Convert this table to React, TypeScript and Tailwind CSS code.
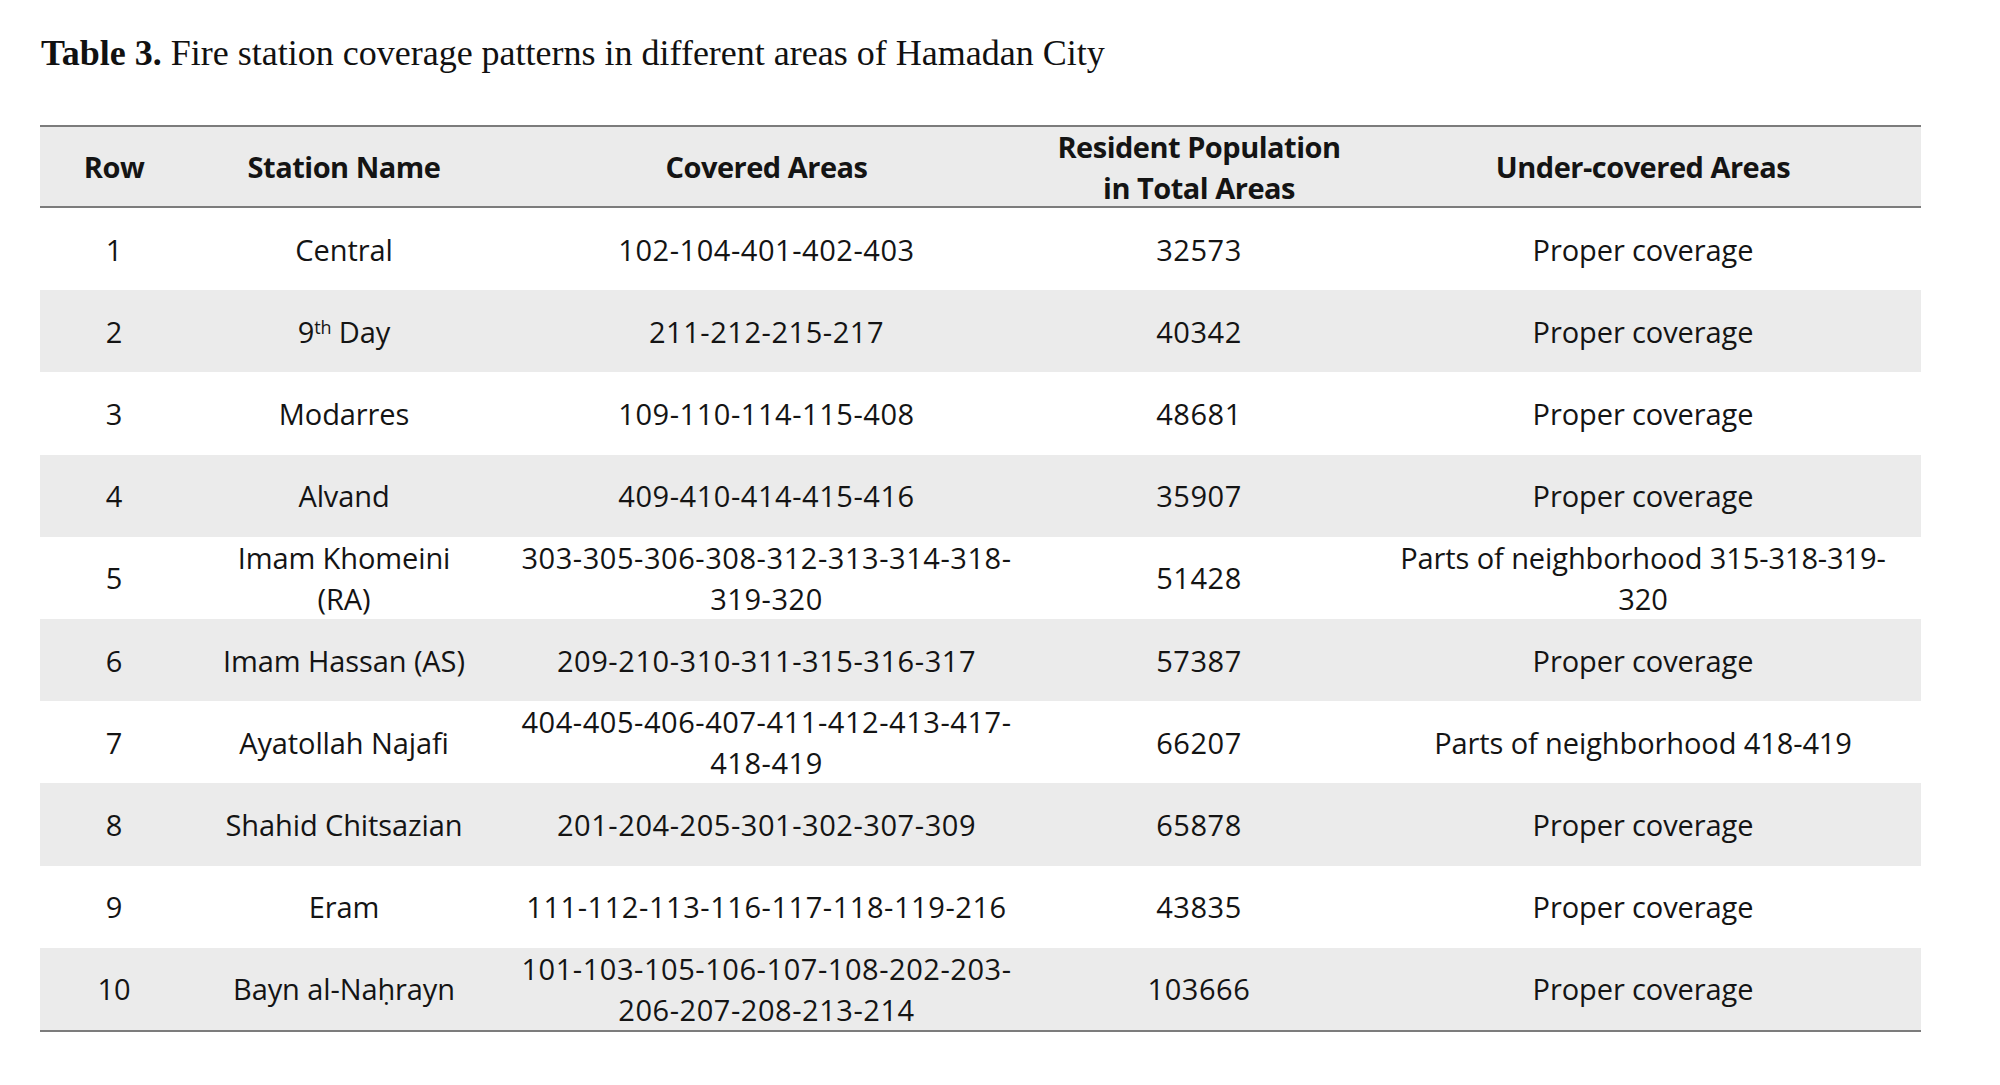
import React from "react";

type Row = {
  n: string;
  name: React.ReactNode;
  areas: React.ReactNode;
  pop: string;
  under: React.ReactNode;
};

const rows: Row[] = [
  { n: "1", name: "Central", areas: "102-104-401-402-403", pop: "32573", under: "Proper coverage" },
  {
    n: "2",
    name: (
      <>
        9<sup className="text-[0.62em]">th</sup> Day
      </>
    ),
    areas: "211-212-215-217",
    pop: "40342",
    under: "Proper coverage",
  },
  { n: "3", name: "Modarres", areas: "109-110-114-115-408", pop: "48681", under: "Proper coverage" },
  { n: "4", name: "Alvand", areas: "409-410-414-415-416", pop: "35907", under: "Proper coverage" },
  {
    n: "5",
    name: (
      <>
        Imam Khomeini
        <br />
        (RA)
      </>
    ),
    areas: (
      <>
        303-305-306-308-312-313-314-318-
        <br />
        319-320
      </>
    ),
    pop: "51428",
    under: (
      <>
        Parts of neighborhood 315-318-319-
        <br />
        320
      </>
    ),
  },
  { n: "6", name: "Imam Hassan (AS)", areas: "209-210-310-311-315-316-317", pop: "57387", under: "Proper coverage" },
  {
    n: "7",
    name: "Ayatollah Najafi",
    areas: (
      <>
        404-405-406-407-411-412-413-417-
        <br />
        418-419
      </>
    ),
    pop: "66207",
    under: "Parts of neighborhood 418-419",
  },
  { n: "8", name: "Shahid Chitsazian", areas: "201-204-205-301-302-307-309", pop: "65878", under: "Proper coverage" },
  { n: "9", name: "Eram", areas: "111-112-113-116-117-118-119-216", pop: "43835", under: "Proper coverage" },
  {
    n: "10",
    name: "Bayn al-Naḥrayn",
    areas: (
      <>
        101-103-105-106-107-108-202-203-
        <br />
        206-207-208-213-214
      </>
    ),
    pop: "103666",
    under: "Proper coverage",
  },
];

const cell = "flex items-center justify-center text-center";

export default function App() {
  return (
    <div className="w-[2000px] h-[1085px] bg-white text-[#141414] overflow-hidden">
      <div className="h-[125px] pl-[41px] pt-[31px]">
        <p
          className="text-[36px] leading-[44px] text-[#111]"
          style={{ fontFamily: '"Liberation Serif", "Times New Roman", serif' }}
        >
          <span className="font-bold">Table 3.</span> Fire station coverage patterns in different areas of Hamadan City
        </p>
      </div>
      <div
        className="ml-[40px] w-[1881px] border-t-2 border-b-2 border-[#7c7c7c] text-[29px] leading-[41px] tracking-[-0.1px]"
        style={{ fontFamily: '"Open Sans", Lato, sans-serif' }}
      >
        <div className="flex h-[81px] bg-[#ebebeb] border-b-2 border-[#7c7c7c] font-bold tracking-[-0.5px]">
          <div className={`${cell} w-[148px]`}>Row</div>
          <div className={`${cell} w-[312px]`}>Station Name</div>
          <div className={`${cell} w-[533px]`}>Covered Areas</div>
          <div className={`${cell} w-[332px]`}>
            Resident Population
            <br />
            in Total Areas
          </div>
          <div className={`${cell} w-[556px]`}>Under-covered Areas</div>
        </div>
        {rows.map((r, i) => (
          <div key={r.n} className={`flex h-[82.2px] ${i % 2 === 1 ? "bg-[#ebebeb]" : "bg-white"}`}>
            <div className={`${cell} w-[148px]`}>{r.n}</div>
            <div className={`${cell} w-[312px]`}>
              <div>{r.name}</div>
            </div>
            <div className={`${cell} w-[533px] tracking-[0.55px]`}>
              <div>{r.areas}</div>
            </div>
            <div className={`${cell} w-[332px] tracking-[0.55px]`}>{r.pop}</div>
            <div className={`${cell} w-[556px]`}>
              <div>{r.under}</div>
            </div>
          </div>
        ))}
      </div>
    </div>
  );
}
